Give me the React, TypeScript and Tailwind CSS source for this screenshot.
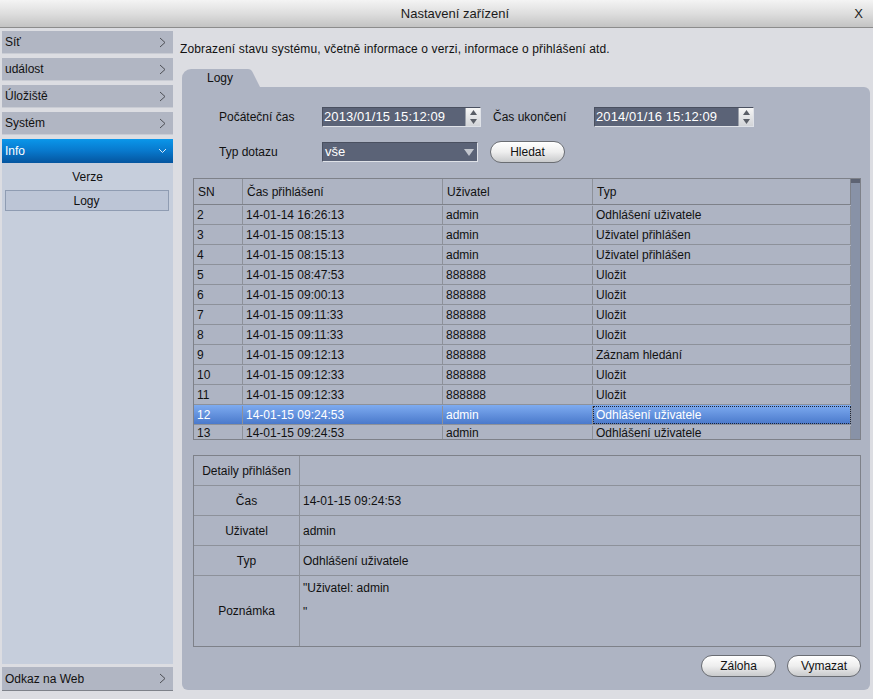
import React from "react";

const rows: string[][] = [
  ["2", "14-01-14 16:26:13", "admin", "Odhlášení uživatele"],
  ["3", "14-01-15 08:15:13", "admin", "Uživatel přihlášen"],
  ["4", "14-01-15 08:15:13", "admin", "Uživatel přihlášen"],
  ["5", "14-01-15 08:47:53", "888888", "Uložit"],
  ["6", "14-01-15 09:00:13", "888888", "Uložit"],
  ["7", "14-01-15 09:11:33", "888888", "Uložit"],
  ["8", "14-01-15 09:11:33", "888888", "Uložit"],
  ["9", "14-01-15 09:12:13", "888888", "Záznam hledání"],
  ["10", "14-01-15 09:12:33", "888888", "Uložit"],
  ["11", "14-01-15 09:12:33", "888888", "Uložit"],
  ["12", "14-01-15 09:24:53", "admin", "Odhlášení uživatele"],
  ["13", "14-01-15 09:24:53", "admin", "Odhlášení uživatele"],
];

function Chevron() {
  return (
    <svg width="7" height="11" viewBox="0 0 7 11" className="shrink-0">
      <polyline points="1,1 6,5.5 1,10" fill="none" stroke="#4d4f55" strokeWidth="1" />
    </svg>
  );
}

function NavItem({ label }: { label: string }) {
  return (
    <div className="h-[23px] mb-[4px] bg-[#b1b6c3] border-b border-[#c9ccd4] flex items-center justify-between pl-[3px] pr-[7px] text-[#111]">
      <span>{label}</span>
      <Chevron />
    </div>
  );
}

function Spinner() {
  return (
    <div className="w-[15px] h-full flex flex-col bg-gradient-to-b from-[#f6f6f6] to-[#d2d4d8] border-l border-[#9ca1ab]">
      <div className="flex-1 flex items-center justify-center">
        <svg width="7" height="5" viewBox="0 0 7 5">
          <path d="M0 5 L3.5 0 L7 5Z" fill="#5a5e66" />
        </svg>
      </div>
      <div className="flex-1 flex items-center justify-center">
        <svg width="7" height="5" viewBox="0 0 7 5">
          <path d="M0 0 L3.5 5 L7 0Z" fill="#5a5e66" />
        </svg>
      </div>
    </div>
  );
}

function TimeInput({ value, w }: { value: string; w: string }) {
  return (
    <div className={`flex h-[20px] ${w} border border-[#dfe2e8] border-t-[#4a5060] border-l-[#4a5060] bg-[#5b6377]`}>
      <div className="flex-1 flex items-center pl-[1px] text-white text-[13px] tracking-[0.1px]">{value}</div>
      <Spinner />
    </div>
  );
}

function PillButton({ label, w }: { label: string; w: string }) {
  return (
    <div className={`${w} h-[22px] rounded-full border border-[#6a6d73] bg-gradient-to-b from-[#ffffff] via-[#eeeeee] to-[#c9cacc] flex items-center justify-center text-[#111] shadow-[inset_0_1px_0_#ffffff]`}>
      {label}
    </div>
  );
}

export default function App() {
  return (
    <div className="w-[873px] h-[699px] overflow-hidden bg-[#dcdde2] flex flex-col font-['Liberation_Sans',sans-serif] text-[12px] text-[#111] leading-[14px]">
      {/* Title bar */}
      <div className="h-[28px] shrink-0 bg-gradient-to-b from-[#f4f4f4] via-[#dedede] to-[#c3c3c3] border-b border-[#8c8c8c] flex items-center">
        <div className="flex-1 flex justify-center pl-[67px] text-[13px] font-['Liberation_Sans_Narrow','Liberation_Sans',sans-serif] text-[#1a1a1a]">
          Nastavení zařízení
        </div>
        <div className="w-[30px] text-[13px] text-[#222] font-['Liberation_Sans_Narrow','Liberation_Sans',sans-serif] pr-[10px] text-right">
          X
        </div>
      </div>

      <div className="flex flex-1 min-h-0">
        {/* Sidebar */}
        <div className="w-[173px] shrink-0 flex flex-col pl-[2px] pt-[3px] pb-[8px]">
          <NavItem label="Síť" />
          <NavItem label="událost" />
          <NavItem label="Úložiště" />
          <NavItem label="Systém" />
          <div className="h-[24px] bg-gradient-to-b from-[#0b97ea] via-[#0878cc] to-[#05559f] flex items-center justify-between pl-[3px] pr-[6px] text-white">
            <span>Info</span>
            <svg width="9" height="6" viewBox="0 0 9 6">
              <polyline points="1,1 4.5,4.5 8,1" fill="none" stroke="#dfe9f5" strokeWidth="1" />
            </svg>
          </div>
          <div className="flex-1 bg-[#c6cedc] flex flex-col items-center pt-[7px]">
            <div className="h-[14px] flex items-center">Verze</div>
            <div className="mt-[6px] w-[164px] h-[21px] border border-[#8f9cb2] bg-[#bcc5d6] flex items-center justify-center -translate-x-[1px]">
              Logy
            </div>
          </div>
          <div className="h-[3px]" />
          <div className="h-[24px] bg-[#b1b6c3] border-b border-[#7e828a] flex items-center justify-between pl-[3px] pr-[7px]">
            <span>Odkaz na Web</span>
            <Chevron />
          </div>
        </div>

        {/* Main */}
        <div className="flex-1 flex flex-col pl-[9px] pr-[3px] pb-[9px]">
          <div className="pt-[14px] ml-[-2px] h-[28px] tracking-[0.14px]">
            Zobrazení stavu systému, včetně informace o verzi, informace o přihlášení atd.
          </div>
          {/* Tab */}
          <div className="mt-[13px] flex items-end h-[18px]">
            <div className="h-[18px] w-[64px] bg-[#aeb4c3] rounded-tl-[9px] flex items-center pl-[25px]">
              Logy
            </div>
            <svg width="14" height="18" viewBox="0 0 14 18" className="block">
              <path d="M0 0 L2 0 Q5 0 6.5 3 L14 18 L0 18Z" fill="#aeb4c3" />
            </svg>
          </div>
          {/* Panel */}
          <div className="flex-1 bg-[#aeb4c3] rounded-tr-[6px] rounded-b-[6px] pt-[20px] flex flex-col">
            {/* Form */}
            <div className="pl-[37px] flex items-center h-[20px]">
              <div className="w-[103px]">Počáteční čas</div>
              <TimeInput value="2013/01/15 15:12:09" w="w-[159px]" />
              <div className="w-[101px] ml-[12px]">Čas ukončení</div>
              <TimeInput value="2014/01/16 15:12:09" w="w-[160px]" />
            </div>
            <div className="pl-[37px] flex items-center h-[22px] mt-[14px]">
              <div className="w-[103px]">Typ dotazu</div>
              <div className="w-[156px] h-[20px] bg-[#5b6377] border border-[#dfe2e8] border-t-[#4a5060] border-l-[#4a5060] flex items-center">
                <div className="flex-1 pl-[2px] text-white text-[13px]">vše</div>
                <div className="w-[16px] h-full flex items-center justify-center">
                  <svg width="10" height="7" viewBox="0 0 10 7">
                    <path d="M0 0 L10 0 L5 7Z" fill="#c2c6ce" />
                  </svg>
                </div>
              </div>
              <div className="ml-[12px]">
                <PillButton label="Hledat" w="w-[75px]" />
              </div>
            </div>

            {/* Log table */}
            <div className="mt-[15px] ml-[11px] w-[668px] h-[262px] border border-[#7e8189] flex overflow-hidden">
              <div className="flex-1 flex flex-col overflow-hidden">
                <div className="grid grid-cols-[49px_200px_150px_258px] h-[26px] shrink-0 border-b border-[#7e8189]">
                  <div className="border-r border-[#8d919a] flex items-center pl-[4px]">SN</div>
                  <div className="border-r border-[#8d919a] flex items-center pl-[4px]">Čas přihlášení</div>
                  <div className="border-r border-[#8d919a] flex items-center pl-[4px]">Uživatel</div>
                  <div className="border-r border-[#7e8189] flex items-center pl-[4px]">Typ</div>
                </div>
                {rows.map((r, i) => {
                  const sel = r[0] === "12";
                  const last = i === rows.length - 1;
                  return (
                    <div
                      key={r[0]}
                      className={`grid grid-cols-[49px_200px_150px_258px] shrink-0 ${
                        last ? "h-[15px] leading-[13px] pt-[1px]" : "h-[20px] border-b border-[#8d919a] pt-[1px]"
                      } ${sel ? "bg-gradient-to-b from-[#7eabf0] to-[#4a79cb] text-white" : ""}`}
                    >
                      <div className="border-r border-[#8d919a] flex items-center pl-[3px]">{r[0]}</div>
                      <div className="border-r border-[#8d919a] flex items-center pl-[3px]">{r[1]}</div>
                      <div className="border-r border-[#8d919a] flex items-center pl-[3px]">{r[2]}</div>
                      <div
                        className={`border-r border-[#8d919a] flex items-center pl-[3px] ${
                          sel ? "outline outline-1 outline-dotted outline-[#1b2438] -outline-offset-1" : ""
                        }`}
                      >
                        {r[3]}
                      </div>
                    </div>
                  );
                })}
              </div>
              <div className="w-[9px] shrink-0 bg-[#8892a7] flex flex-col">
                <div className="h-[4px] bg-[#5d6373]" />
              </div>
            </div>

            {/* Details */}
            <div className="mt-[15px] ml-[11px] w-[668px] border border-[#7e8189] grid grid-cols-[106px_1fr]">
              <div className="h-[30px] border-r border-b border-[#8d919a] flex items-center justify-center whitespace-nowrap">
                Detaily přihlášen
              </div>
              <div className="h-[30px] border-b border-[#8d919a]" />
              <div className="h-[30px] border-r border-b border-[#8d919a] flex items-center justify-center">Čas</div>
              <div className="h-[30px] border-b border-[#8d919a] flex items-center pl-[3px]">14-01-15 09:24:53</div>
              <div className="h-[30px] border-r border-b border-[#8d919a] flex items-center justify-center">Uživatel</div>
              <div className="h-[30px] border-b border-[#8d919a] flex items-center pl-[3px]">admin</div>
              <div className="h-[30px] border-r border-b border-[#8d919a] flex items-center justify-center">Typ</div>
              <div className="h-[30px] border-b border-[#8d919a] flex items-center pl-[3px]">Odhlášení uživatele</div>
              <div className="h-[70px] border-r border-[#8d919a] flex items-center justify-center">Poznámka</div>
              <div className="h-[70px] pl-[3px] leading-[24px]">
                <div>"Uživatel: admin</div>
                <div>"</div>
              </div>
            </div>

            {/* Buttons */}
            <div className="mt-[8px] flex justify-end gap-[11px] pr-[9px]">
              <PillButton label="Záloha" w="w-[75px]" />
              <PillButton label="Vymazat" w="w-[74px]" />
            </div>
          </div>
        </div>
      </div>
    </div>
  );
}
